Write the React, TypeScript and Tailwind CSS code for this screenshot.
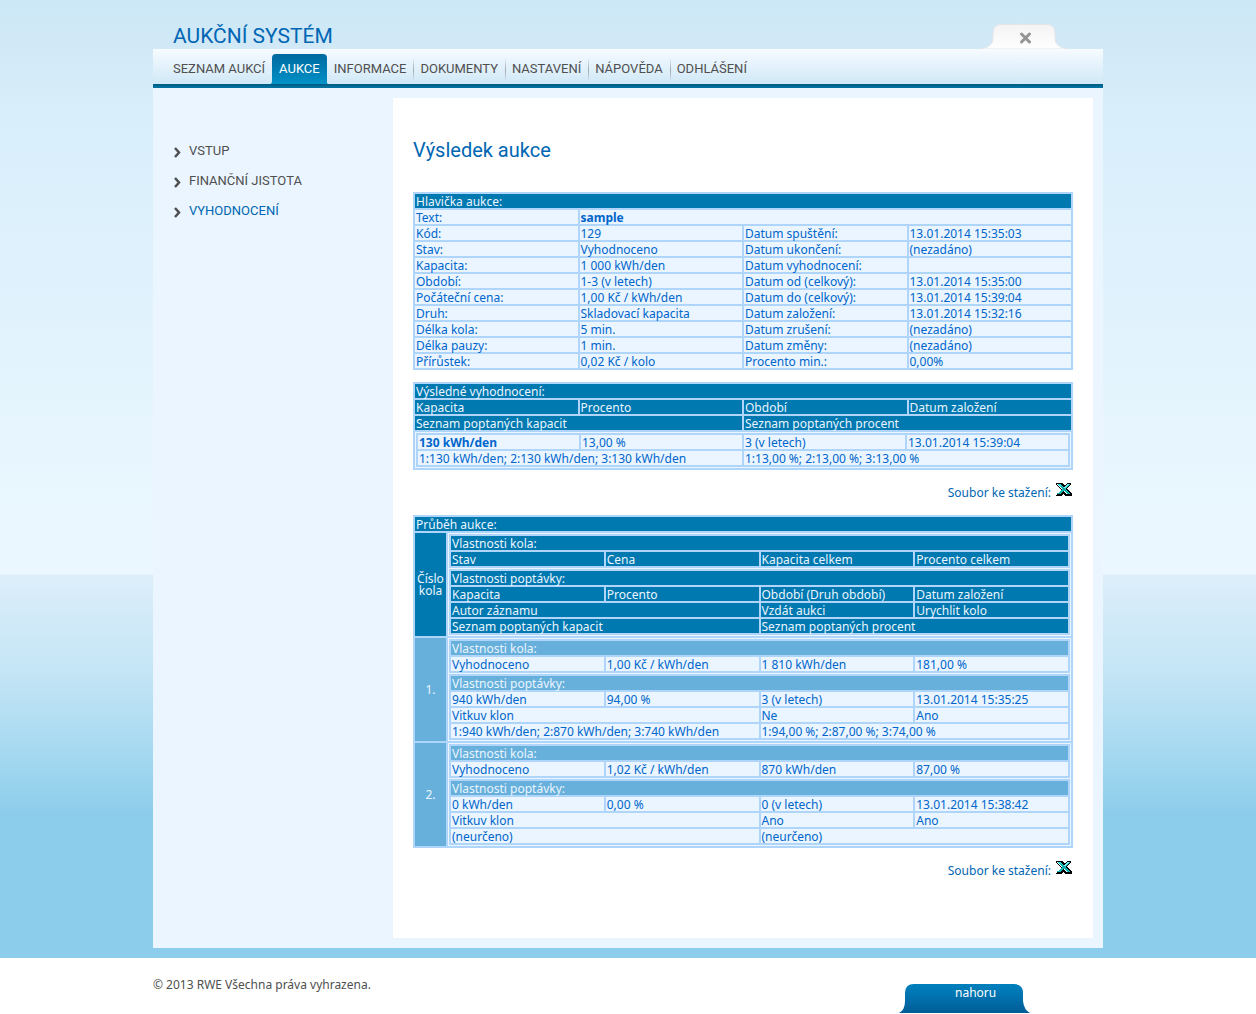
import { clsx } from "clsx";
import type { ReactNode } from "react";

const navItems = [
	"SEZNAM AUKCÍ",
	"AUKCE",
	"INFORMACE",
	"DOKUMENTY",
	"NASTAVENÍ",
	"NÁPOVĚDA",
	"ODHLÁŠENÍ",
];

const sideItems = ["VSTUP", "FINANČNÍ JISTOTA", "VYHODNOCENÍ"];

const auctionRows = [
	["Kód:", "129", "Datum spuštění:", "13.01.2014 15:35:03"],
	["Stav:", "Vyhodnoceno", "Datum ukončení:", "(nezadáno)"],
	["Kapacita:", "1 000 kWh/den", "Datum vyhodnocení:", ""],
	["Období:", "1-3 (v letech)", "Datum od (celkový):", "13.01.2014 15:35:00"],
	[
		"Počáteční cena:",
		"1,00 Kč / kWh/den",
		"Datum do (celkový):",
		"13.01.2014 15:39:04",
	],
	["Druh:", "Skladovací kapacita", "Datum založení:", "13.01.2014 15:32:16"],
	["Délka kola:", "5 min.", "Datum zrušení:", "(nezadáno)"],
	["Délka pauzy:", "1 min.", "Datum změny:", "(nezadáno)"],
	["Přírůstek:", "0,02 Kč / kolo", "Procento min.:", "0,00%"],
];

const rounds = [
	{
		no: "1.",
		props: ["Vyhodnoceno", "1,00 Kč / kWh/den", "1 810 kWh/den", "181,00 %"],
		demand: ["940 kWh/den", "94,00 %", "3 (v letech)", "13.01.2014 15:35:25"],
		author: ["Vitkuv klon", "Ne", "Ano"],
		lists: [
			"1:940 kWh/den; 2:870 kWh/den; 3:740 kWh/den",
			"1:94,00 %; 2:87,00 %; 3:74,00 %",
		],
	},
	{
		no: "2.",
		props: ["Vyhodnoceno", "1,02 Kč / kWh/den", "870 kWh/den", "87,00 %"],
		demand: ["0 kWh/den", "0,00 %", "0 (v letech)", "13.01.2014 15:38:42"],
		author: ["Vitkuv klon", "Ano", "Ano"],
		lists: ["(neurčeno)", "(neurčeno)"],
	},
];

const gridTable = "w-full table-fixed border-separate border-spacing-[2px] bg-[#b0d5fb]";
const headCell = "bg-[#0078b0] text-[#eaf5ff]";
const subHeadCell = "bg-[#67b0db] text-[#eaf5ff]";
const bodyCell = "bg-[#eaf5ff] text-[#0066cc]";

const Cell = ({
	children,
	span = 1,
	tone = bodyCell,
	strong = false,
}: {
	children?: ReactNode;
	span?: number;
	tone?: string;
	strong?: boolean;
}) => {
	const cls = clsx(
		"h-[14px] whitespace-nowrap px-px pb-0 pt-[2px] text-left leading-3",
		strong ? "font-bold" : "font-normal",
		tone,
	);
	return tone === bodyCell ? (
		<td colSpan={span} className={cls}>
			{children}
		</td>
	) : (
		<th colSpan={span} className={cls}>
			{children}
		</th>
	);
};

const RoundTables = ({
	head,
	tone,
	props,
	demand,
	author,
	lists,
}: {
	head: string;
	tone: string;
	props: string[];
	demand: string[];
	author: string[];
	lists: string[];
}) => (
	<td className="bg-[#eaf5ff] p-px">
		<table className={gridTable}>
			<tbody>
				<tr>
					<Cell span={4} tone={head}>
						Vlastnosti kola:
					</Cell>
				</tr>
				<tr>
					{props.map((text, i) => (
						<Cell key={i} tone={tone}>
							{text}
						</Cell>
					))}
				</tr>
			</tbody>
		</table>
		<table className={clsx(gridTable, "mt-px")}>
			<tbody>
				<tr>
					<Cell span={4} tone={head}>
						Vlastnosti poptávky:
					</Cell>
				</tr>
				<tr>
					{demand.map((text, i) => (
						<Cell key={i} tone={tone}>
							{text}
						</Cell>
					))}
				</tr>
				<tr>
					{author.map((text, i) => (
						<Cell key={i} span={i === 0 ? 2 : 1} tone={tone}>
							{text}
						</Cell>
					))}
				</tr>
				<tr>
					{lists.map((text, i) => (
						<Cell key={i} span={2} tone={tone}>
							{text}
						</Cell>
					))}
				</tr>
			</tbody>
		</table>
	</td>
);

const ExcelIcon = () => (
	<svg width="16" height="13" viewBox="0 0 16 13" shapeRendering="crispEdges">
		<path d="M0 0h6l3 3 2-3h4v1l-4 5 4 4h1v3H9l-2-2-2 2H0v-1l5-5-5-5z" fill="#000" />
		<path d="M1 1h2l9 10h-2z" fill="#fff" />
		<path d="M2 1h3l9 10h-3z" fill="#22d3d6" />
		<path d="M11 1h3L5 11H1v-1h2z" fill="#17b3b3" />
		<path d="M11 1h2L9 6 8 5z" fill="#7af3f3" />
		<path d="M5 3h1l7 8h-1z" fill="#0b8686" />
	</svg>
);

const Download = () => (
	<div className="flex items-start justify-end gap-[5px] pr-px pt-[13px]">
		<a href="#" className="mt-[3px] leading-[14px] text-[#0066b3]">
			Soubor ke stažení:
		</a>
		<a href="#" aria-label="Excel">
			<ExcelIcon />
		</a>
	</div>
);

const App = () => {
	return (
		<div
			id="top"
			className="min-h-screen bg-white font-['Noto_Sans','DejaVu_Sans_Condensed',sans-serif] text-[12px] text-[#4f4f4f]"
		>
			<div className="bg-[linear-gradient(to_bottom,#cce8f6_0px,#d2e9f7_50px,#d8eefb_110px,#ecf8ff_574px,#ddeefa_575px,#c6e6f6_665px,#a9daf1_745px,#8ccdeb_815px)] pb-[10px]">
				<div className="mx-auto max-w-[950px]">
					<header>
						<div className="flex h-[49px] items-end justify-between pl-5 pr-[35px]">
							<h1 className="font-[Roboto,sans-serif] text-[21px] leading-[26px] text-[#0066b3]">
								AUKČNÍ SYSTÉM
							</h1>
							<button type="button" aria-label="Zavřít" className="cursor-pointer">
								<svg width="88" height="25" viewBox="0 0 88 25" className="block">
									<defs>
										<linearGradient id="closeTab" x1="0" y1="0" x2="0" y2="1">
											<stop offset="0" stopColor="#f3f3f4" />
											<stop offset="1" stopColor="#fff" />
										</linearGradient>
									</defs>
									<path
										d="M0 24.500C9 24.500 12.500 20 13 14V9Q13 .5 21 .5H67Q75 .5 75 9V14C75.500 20 79 24.500 88 24.500V25H0z"
										fill="url(#closeTab)"
										stroke="#e4e6ea"
									/>
									<path
										d="M41.500 10l8 8m0-8l-8 8"
										stroke="#949494"
										strokeWidth="3"
										strokeLinecap="round"
									/>
								</svg>
							</button>
						</div>
						<nav className="flex h-[39px] items-end border-b-2 border-[#00709c] bg-[linear-gradient(to_bottom,#f6fbff,#ebf5fd_30%,#cde8f5)] pl-[13px] font-[Roboto,sans-serif] text-[13px] shadow-[inset_0_-2px_0_#006089]">
							{navItems.map((item, i) => (
								<a
									key={item}
									href="#"
									className={clsx(
										"relative mb-[2px] h-[30px] px-[7px] leading-[30px]",
										i === 1 &&
											"rounded-t-[4px] bg-linear-to-b from-[#00699f] to-[#0091c7] text-white",
									)}
								>
									{item}
									{i > 2 && (
										<span className="absolute left-0 top-1 h-6 w-px bg-[linear-gradient(to_bottom,transparent,#a3a9ae,transparent)]" />
									)}
									{i === 1 && (
										<svg
											width="59"
											height="3"
											viewBox="0 0 59 3"
											preserveAspectRatio="none"
											className="absolute -left-[2px] bottom-0 w-[calc(100%+4px)]"
										>
											<path d="M0 3q2 0 2-3h55q0 3 2 3z" fill="#0091c7" />
										</svg>
									)}
								</a>
							))}
						</nav>
					</header>

					<div className="flex bg-[#eaf5ff] py-[10px] pr-[10px]">
						<aside className="w-60 shrink-0 pl-5 pt-[38px]">
							<ul className="font-[Roboto,sans-serif] text-[13px]">
								{sideItems.map((item, i) => (
									<li key={item}>
										<a
											href="#"
											className={clsx(
												"flex h-[30px] items-center gap-[7px]",
												i === 2 && "text-[#0066b3]",
											)}
										>
											<svg width="9" height="11" viewBox="0 0 9 11" className="mt-[2px]">
												<path
													d="M2 1l4 4.500-4 4.500"
													fill="none"
													stroke="#4f4f4f"
													strokeWidth="2.500"
												/>
											</svg>
											{item}
										</a>
									</li>
								))}
							</ul>
						</aside>

						<main className="min-h-[840px] min-w-0 grow bg-white px-5 pb-[59px] pt-[38px]">
							<h2 className="mb-7 font-[Roboto,sans-serif] text-[20px] leading-[28px] text-[#0066b3]">
								Výsledek aukce
							</h2>

							<table className={gridTable}>
								<tbody>
									<tr>
										<Cell span={4} tone={headCell}>
											Hlavička aukce:
										</Cell>
									</tr>
									<tr>
										<Cell>Text:</Cell>
										<Cell span={3} strong>
											sample
										</Cell>
									</tr>
									{auctionRows.map((row) => (
										<tr key={row[0]}>
											{row.map((text, i) => (
												<Cell key={i}>{text}</Cell>
											))}
										</tr>
									))}
								</tbody>
							</table>

							<table className={clsx(gridTable, "mt-3")}>
								<tbody>
									<tr>
										<Cell span={4} tone={headCell}>
											Výsledné vyhodnocení:
										</Cell>
									</tr>
									<tr>
										<Cell tone={headCell}>Kapacita</Cell>
										<Cell tone={headCell}>Procento</Cell>
										<Cell tone={headCell}>Období</Cell>
										<Cell tone={headCell}>Datum založení</Cell>
									</tr>
									<tr>
										<Cell span={2} tone={headCell}>
											Seznam poptaných kapacit
										</Cell>
										<Cell span={2} tone={headCell}>
											Seznam poptaných procent
										</Cell>
									</tr>
									<tr>
										<td colSpan={4} className="bg-[#eaf5ff] p-px">
											<table className={gridTable}>
												<tbody>
													<tr>
														<Cell strong>130 kWh/den</Cell>
														<Cell>13,00 %</Cell>
														<Cell>3 (v letech)</Cell>
														<Cell>13.01.2014 15:39:04</Cell>
													</tr>
													<tr>
														<Cell span={2}>
															1:130 kWh/den; 2:130 kWh/den; 3:130 kWh/den
														</Cell>
														<Cell span={2}>1:13,00 %; 2:13,00 %; 3:13,00 %</Cell>
													</tr>
												</tbody>
											</table>
										</td>
									</tr>
								</tbody>
							</table>
							<Download />

							<table className={clsx(gridTable, "mt-[15px]")}>
								<colgroup>
									<col className="w-[31px]" />
									<col />
								</colgroup>
								<tbody>
									<tr>
										<Cell span={2} tone={headCell}>
											Průběh aukce:
										</Cell>
									</tr>
									<tr>
										<th className={clsx(headCell, "text-center font-normal leading-3")}>
											Číslo kola
										</th>
										<RoundTables
											head={headCell}
											tone={headCell}
											props={["Stav", "Cena", "Kapacita celkem", "Procento celkem"]}
											demand={[
												"Kapacita",
												"Procento",
												"Období (Druh období)",
												"Datum založení",
											]}
											author={["Autor záznamu", "Vzdát aukci", "Urychlit kolo"]}
											lists={["Seznam poptaných kapacit", "Seznam poptaných procent"]}
										/>
									</tr>
									{rounds.map((round) => (
										<tr key={round.no}>
											<th className={clsx(subHeadCell, "text-center font-normal")}>
												{round.no}
											</th>
											<RoundTables
												head={subHeadCell}
												tone={bodyCell}
												props={round.props}
												demand={round.demand}
												author={round.author}
												lists={round.lists}
											/>
										</tr>
									))}
								</tbody>
							</table>
							<Download />
						</main>
					</div>
				</div>
			</div>

			<footer className="mx-auto flex max-w-[950px] items-start justify-between pr-[73px]">
				<p className="pt-[19px] leading-4">© 2013 RWE Všechna práva vyhrazena.</p>
				<a href="#top" className="relative mt-[26px] block h-[29px] w-[131px] text-white">
					<svg width="131" height="29" viewBox="0 0 131 29" className="block">
						<defs>
							<linearGradient id="topTab" x1="0" y1="0" x2="0" y2="1">
								<stop offset="0" stopColor="#007fbd" />
								<stop offset="0.300" stopColor="#0077b4" />
								<stop offset="1" stopColor="#005c96" />
							</linearGradient>
						</defs>
						<path
							d="M0 29Q6 26 6 17V9Q6 0 15 0H115Q124 0 124 9V17Q125 26 131 29z"
							fill="url(#topTab)"
						/>
					</svg>
					<span className="absolute left-[56px] top-[2px] leading-[14px]">nahoru</span>
				</a>
			</footer>
		</div>
	);
};

export default App;
